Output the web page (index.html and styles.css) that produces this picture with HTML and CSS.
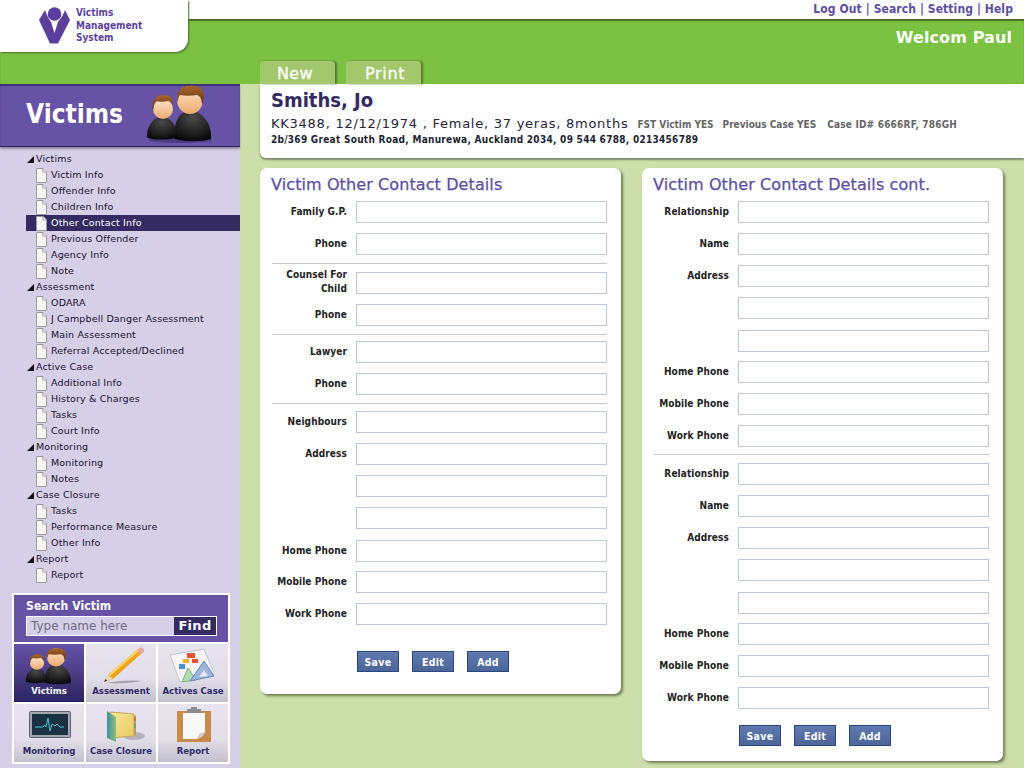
FILE: index.html
```html
<!DOCTYPE html>
<html lang="en">
<head>
<meta charset="utf-8">
<title>Victims Management System</title>
<link rel="stylesheet" href="styles.css">
</head>
<body>
<svg class="defs" width="0" height="0" aria-hidden="true">
  <defs>
    <linearGradient id="skin" x1="0" y1="0" x2="0" y2="1"><stop offset="0" stop-color="#fde6cc"/><stop offset="1" stop-color="#eda96f"/></linearGradient>
    <linearGradient id="hair" x1="0" y1="0" x2="0" y2="1"><stop offset="0" stop-color="#a8642c"/><stop offset="1" stop-color="#5e3213"/></linearGradient>
    <radialGradient id="cloth" cx=".5" cy=".25" r=".8"><stop offset="0" stop-color="#4a4a4a"/><stop offset="1" stop-color="#050505"/></radialGradient>
    <linearGradient id="folder" x1="0" y1="0" x2="1" y2="0"><stop offset="0" stop-color="#3f8fa0"/><stop offset="1" stop-color="#8cc07c"/></linearGradient>
    <linearGradient id="pages" x1="0" y1="0" x2="1" y2="1"><stop offset="0" stop-color="#fbe89a"/><stop offset="1" stop-color="#e9c860"/></linearGradient>
    <symbol id="people" viewBox="146 86 68 60" preserveAspectRatio="none">
      <ellipse cx="180" cy="142" rx="32" ry="3" fill="#2d2457" opacity=".45"/>
      <path d="M175 141c-2-15 3-27 15-29 13 2 22 14 21 29-11 3-25 3-36 0z" fill="url(#cloth)"/>
      <ellipse cx="190" cy="102" rx="13" ry="14" fill="url(#skin)"/>
      <path d="M178 105c-3-10 2-17 11-17 9-1 15 2 15 10 0 4-1 7-2 9 0-6-2-9-5-10-6 1-12 1-17 0-2 2-2 5-2 8z" fill="url(#hair)"/>
      <path d="M147 137c1-11 7-18 15-18 8 0 14 7 15 17 0 3 0 4-1 4-9 2-20 2-28 0-1 0-1-1-1-3z" fill="url(#cloth)"/>
      <ellipse cx="163" cy="111" rx="10" ry="10" fill="url(#skin)"/>
      <path d="M153 113c-2-8 1-16 10-16 7 0 11 3 10 10-1-2-2-4-4-4-5 1-10 1-13 0-2 2-2 5-3 10z" fill="url(#hair)"/>
    </symbol>
    <symbol id="doc" viewBox="0 0 11 15">
      <path d="M.5.500h6.500l3.500 3.500v10.500h-10z" fill="#f6f6f6" stroke="#9a9a9a"/>
      <path d="M7 .5v3.500h3.500" fill="#fff" stroke="#9a9a9a"/>
    </symbol>
  </defs>
</svg>

<div class="shell">
  <header class="masthead">
    <div class="logo">
      <svg class="logo-mark" viewBox="39 7 32 37" aria-hidden="true">
        <circle cx="54.500" cy="14" r="6.800" fill="#5a3f9e"/>
        <path d="M39 20l6-10c2 6 4 9 6 12l3.500 11 3.500-11c2-3 5-6 7-12l5 10-12 23.500h-8z" fill="#5a3f9e"/>
      </svg>
      <div class="logo-text">Victims<br>Management<br>System</div>
    </div>
    <nav class="toplinks"><a>Log Out</a> | <a>Search</a> | <a>Setting</a> | <a>Help</a></nav>
    <div class="greenbar">
      <div class="welcome">Welcom Paul</div>
      <div class="tabs">
        <a class="tab">New</a>
        <a class="tab">Print</a>
      </div>
    </div>
  </header>

  <div class="content">
    <aside class="sidebar">
      <div class="side-head">
        <span>Victims</span>
        <svg class="side-people"><use href="#people"/></svg>
      </div>
      <ul class="tree">
        <li class="group">Victims</li>
        <li class="item"><svg class="doc"><use href="#doc"/></svg>Victim Info</li>
        <li class="item"><svg class="doc"><use href="#doc"/></svg>Offender Info</li>
        <li class="item"><svg class="doc"><use href="#doc"/></svg>Children Info</li>
        <li class="item active"><svg class="doc"><use href="#doc"/></svg>Other Contact Info</li>
        <li class="item"><svg class="doc"><use href="#doc"/></svg>Previous Offender</li>
        <li class="item"><svg class="doc"><use href="#doc"/></svg>Agency Info</li>
        <li class="item"><svg class="doc"><use href="#doc"/></svg>Note</li>
        <li class="group">Assessment</li>
        <li class="item"><svg class="doc"><use href="#doc"/></svg>ODARA</li>
        <li class="item"><svg class="doc"><use href="#doc"/></svg>J Campbell Danger Assessment</li>
        <li class="item"><svg class="doc"><use href="#doc"/></svg>Main Assessment</li>
        <li class="item"><svg class="doc"><use href="#doc"/></svg>Referral Accepted/Declined</li>
        <li class="group">Active Case</li>
        <li class="item"><svg class="doc"><use href="#doc"/></svg>Additional Info</li>
        <li class="item"><svg class="doc"><use href="#doc"/></svg>History &amp; Charges</li>
        <li class="item"><svg class="doc"><use href="#doc"/></svg>Tasks</li>
        <li class="item"><svg class="doc"><use href="#doc"/></svg>Court Info</li>
        <li class="group">Monitoring</li>
        <li class="item"><svg class="doc"><use href="#doc"/></svg>Monitoring</li>
        <li class="item"><svg class="doc"><use href="#doc"/></svg>Notes</li>
        <li class="group">Case Closure</li>
        <li class="item"><svg class="doc"><use href="#doc"/></svg>Tasks</li>
        <li class="item"><svg class="doc"><use href="#doc"/></svg>Performance Measure</li>
        <li class="item"><svg class="doc"><use href="#doc"/></svg>Other Info</li>
        <li class="group">Report</li>
        <li class="item"><svg class="doc"><use href="#doc"/></svg>Report</li>
      </ul>
      <div class="quick">
        <div class="search">
          <div class="search-title">Search Victim</div>
          <div class="search-box"><span class="search-hint">Type name here</span><span class="search-btn">Find</span></div>
        </div>
        <div class="tiles">
          <div class="tile tile-on"><svg class="tile-icon" viewBox="0 0 70 44"><use href="#people" x="11" y="3" width="48" height="39"/></svg><span>Victims</span></div>
          <div class="tile">
            <svg class="tile-icon" viewBox="0 0 70 44">
              <path d="M20 39c10-2 25-3 36-2-10 2-26 3-36 2z" fill="#a5a3ad"/>
              <path d="M18 38l4-7 30-26 4 4-29 26z" fill="#efa41c"/>
              <path d="M22 31l30-26 1.500 1.500-30 26z" fill="#fad468"/>
              <path d="M18 38l4-7 5 4z" fill="#ecd8b8"/><path d="M18 38l1.500-3 1.800 1.500z" fill="#333"/>
              <circle cx="55" cy="6.500" r="3" fill="#eba9a0"/>
            </svg><span>Assessment</span></div>
          <div class="tile">
            <svg class="tile-icon" viewBox="0 0 70 44">
              <path d="M12 11l34-6 10 24-34 9z" fill="#f4f4f8" stroke="#c4c4cc"/>
              <rect x="29" y="9" width="8" height="5" fill="#e85030"/><rect x="25" y="15" width="6" height="4" fill="#f0b030"/><rect x="34" y="15" width="6" height="4" fill="#e85030"/><rect x="21" y="20" width="6" height="5" fill="#5090d8"/>
              <path d="M24 38l6-14 8 12z" fill="#b4dcb0" stroke="#7fb47f"/>
              <path d="M32 37l14-20 10 15z" fill="#9ab4da" stroke="#6888bc"/><path d="M41 33l5-7 4 6z" fill="#e4e8f0"/>
            </svg><span>Actives Case</span></div>
          <div class="tile">
            <svg class="tile-icon" viewBox="0 0 70 44">
              <rect x="15.500" y="7.500" width="41" height="26" rx="1" fill="#a4a8ae" stroke="#5f6268"/>
              <rect x="18" y="10" width="36" height="21" fill="#1c3044"/>
              <path d="M21 23h8l1.500-2 1.500 2 2-9 2 13 2-7 3 2 2-2 3 3h4" fill="none" stroke="#4fc3d0"/>
            </svg><span>Monitoring</span></div>
          <div class="tile">
            <svg class="tile-icon" viewBox="0 0 70 44">
              <ellipse cx="48" cy="32" rx="11" ry="4" fill="#b4b2bc"/>
              <path d="M24 8l24 2v22l-24 2z" fill="url(#pages)" stroke="#c4a858"/>
              <path d="M48 11l2 1v19l-2 1z" fill="#b0a070"/><rect x="48" y="13" width="2" height="4" fill="#d87040"/><rect x="48" y="20" width="2" height="4" fill="#70a860"/>
              <path d="M21 7l9 6v25l-9-4z" fill="url(#folder)"/>
            </svg><span>Case Closure</span></div>
          <div class="tile">
            <svg class="tile-icon" viewBox="0 0 70 44">
              <rect x="19" y="7" width="34" height="31" fill="#c98a4a"/>
              <path d="M25 9h22v19l-8 7h-14z" fill="#f8f8f6"/><path d="M47 28c-4 0-7 2-8 7 4-1 7-3 8-7z" fill="#cfcfcf"/>
              <rect x="29" y="5" width="14" height="4" fill="#8c8c8c"/><rect x="33" y="3" width="6" height="3" fill="#8c8c8c"/>
            </svg><span>Report</span></div>
        </div>
      </div>
    </aside>

    <main class="main">
      <section class="patient">
        <h1 class="patient-name">Smiths, Jo</h1>
        <p class="patient-line">KK3488, 12/12/1974 , Female, 37 yeras, 8months<span class="patient-flag">FST Victim YES</span><span class="patient-flag">Previous Case YES</span><span class="patient-flag patient-case">Case ID# 6666RF, 786GH</span></p>
        <p class="patient-addr">2b/369 Great South Road, Manurewa, Auckland 2034, 09 544 6788, 0213456789</p>
      </section>

      <div class="panels">
        <form class="panel panel-left">
          <h2 class="panel-title">Victim Other Contact Details</h2>
          <div class="row"><label>Family G.P.</label><input></div>
          <div class="row"><label>Phone</label><input></div>
          <hr class="sep">
          <div class="row row-tall"><label>Counsel For Child</label><input></div>
          <div class="row"><label>Phone</label><input></div>
          <hr class="sep sep-a">
          <div class="row"><label>Lawyer</label><input></div>
          <div class="row"><label>Phone</label><input></div>
          <hr class="sep sep-b">
          <div class="row"><label>Neighbours</label><input></div>
          <div class="row"><label>Address</label><input></div>
          <div class="row"><label></label><input></div>
          <div class="row row-wide"><label></label><input></div>
          <div class="row row-narrow"><label>Home Phone</label><input></div>
          <div class="row"><label>Mobile Phone</label><input></div>
          <div class="row"><label>Work Phone</label><input></div>
          <div class="actions"><button type="button">Save</button><button type="button">Edit</button><button type="button">Add</button></div>
        </form>

        <form class="panel panel-right">
          <h2 class="panel-title">Victim Other Contact Details cont.</h2>
          <div class="row"><label>Relationship</label><input></div>
          <div class="row"><label>Name</label><input></div>
          <div class="row"><label>Address</label><input></div>
          <div class="row row-wide"><label></label><input></div>
          <div class="row row-narrow"><label></label><input></div>
          <div class="row"><label>Home Phone</label><input></div>
          <div class="row"><label>Mobile Phone</label><input></div>
          <div class="row"><label>Work Phone</label><input></div>
          <hr class="sep sep-c">
          <div class="row"><label>Relationship</label><input></div>
          <div class="row"><label>Name</label><input></div>
          <div class="row"><label>Address</label><input></div>
          <div class="row row-wide"><label></label><input></div>
          <div class="row row-narrow"><label></label><input></div>
          <div class="row"><label>Home Phone</label><input></div>
          <div class="row"><label>Mobile Phone</label><input></div>
          <div class="row"><label>Work Phone</label><input></div>
          <div class="actions"><button type="button">Save</button><button type="button">Edit</button><button type="button">Add</button></div>
        </form>
      </div>
    </main>
  </div>
</div>
</body>
</html>
```

FILE: styles.css
```css
* { box-sizing: border-box; }
html, body { margin: 0; padding: 0; height: 100%; }
body { font-family: "DejaVu Sans", Verdana, sans-serif; background: #ccdfaa; overflow: hidden; }
.defs { position: absolute; }
.shell { width: 1024px; height: 768px; overflow: hidden; display: flex; flex-direction: column; }

/* Masthead */
.masthead { position: relative; height: 84px; flex: none; background: #fff; }
.logo { position: absolute; z-index: 2; left: 0; top: 0; width: 188px; height: 52px; background: #fff; border-bottom-right-radius: 13px; box-shadow: 1px 1px 2px #4c6d27; display: flex; align-items: flex-start; padding: 7px 0 0 39px; gap: 5px; }
.logo-mark { width: 32px; height: 37px; flex: none; }
.logo-text { font-family: "DejaVu Sans Condensed", "DejaVu Sans", sans-serif; font-weight: bold; font-size: 10px; line-height: 12.500px; color: #5b42a0; }
.toplinks { height: 19px; padding-right: 11px; text-align: right; font-family: "DejaVu Sans Condensed", "DejaVu Sans", sans-serif; font-size: 12px; font-weight: bold; line-height: 18px; color: #5b4ea3; letter-spacing: .1px; }
.greenbar { height: 65px; background: #7bc142; box-shadow: inset 0 2px 1px #4e6d2c; display: flex; flex-direction: column; justify-content: space-between; }
.welcome { text-align: right; padding: 9px 12px 0 0; font-size: 16px; font-weight: bold; color: #fff; line-height: 19px; letter-spacing: .1px; }
.tabs { display: flex; gap: 11px; padding-left: 260px; }
.tab { width: 75px; height: 23px; background: #a3c76c; border-radius: 4px 4px 0 0; box-shadow: 2px 0 2px #56762f; color: #fff; font-size: 16px; line-height: 25px; padding-left: 17px; letter-spacing: .3px; -webkit-text-stroke: .3px #fff; }
.tab + .tab { padding-left: 19px; letter-spacing: .7px; }

.content { display: flex; flex: 1; min-height: 0; }

/* Sidebar */
.sidebar { width: 240px; flex: none; background: #d6cfe8; display: flex; flex-direction: column; }
.side-head { height: 62px; background: #6653a6; box-shadow: inset 0 2px 1px #3d3173, 0 1px 0 #2b2450, 0 3px 2px #8e8aa0; display: flex; align-items: center; justify-content: space-between; padding: 0 26px 2px 26px; color: #fff; font-family: "DejaVu Sans Condensed", "DejaVu Sans", sans-serif; font-size: 26px; font-weight: bold; }
.side-people { width: 68px; height: 60px; flex: none; }
.tree { list-style: none; margin: 5px 0 10px 26px; padding: 0; font-size: 9.500px; color: #16122f; }
.group, .item { height: 16px; line-height: 16px; white-space: nowrap; display: flex; align-items: center; letter-spacing: .15px; }
.group { padding-left: 10px; position: relative; }
.group::before { content: ""; position: absolute; left: 1px; top: 5px; border-style: solid; border-width: 0 0 7px 7px; border-color: transparent transparent #111 transparent; }
.item { padding-left: 10px; }
.doc { width: 11px; height: 15px; flex: none; margin-right: 4px; }
.active { background: #352b63; color: #fff; }

.quick { margin-left: 12px; width: 218px; height: 171px; background: #fff; padding: 2px; display: flex; flex-direction: column; gap: 2px; }
.search { height: 47px; background: #6653a6; padding: 3px 11px 0 12px; color: #fff; flex: none; }
.search-title { font-family: "DejaVu Sans Condensed", "DejaVu Sans", sans-serif; font-size: 12px; font-weight: bold; line-height: 16px; letter-spacing: .1px; }
.search-box { margin-top: 2px; height: 20px; border: 1px solid #fff; background: #d6cfe8; display: flex; justify-content: space-between; }
.search-hint { color: #6e6a80; font-size: 12px; line-height: 18px; padding-left: 4px; }
.search-btn { width: 42px; background: #352b63; color: #fff; font-size: 13px; font-weight: bold; line-height: 18px; text-align: center; letter-spacing: .3px; }
.tiles { display: grid; grid-template-columns: repeat(3, 70px); grid-auto-rows: 58px; gap: 2px; }
.tile { background: linear-gradient(#e7e4ef 0, #e2dfea 60%, #c3c1ce 100%); display: flex; flex-direction: column; align-items: center; justify-content: flex-end; color: #2e2968; font-family: "DejaVu Sans Condensed", "DejaVu Sans", sans-serif; font-size: 9.500px; font-weight: bold; line-height: 12px; padding-bottom: 5px; position: relative; white-space: nowrap; }
.tile-icon { width: 70px; height: 44px; position: absolute; left: 0; top: 0; }
.tile-on { background: linear-gradient(#6653a6 0, #4b3d87 50%, #2a2260 100%); color: #fff; }

/* Main */
.main { flex: 1; min-width: 0; }
.patient { margin-left: 20px; height: 74px; background: #fff; border-bottom-left-radius: 6px; box-shadow: 0 2px 2px #7c8a68; padding: 3px 0 0 11px; }
.patient-name { margin: 0; font-family: "DejaVu Sans Condensed", "DejaVu Sans", sans-serif; font-size: 20px; font-weight: bold; line-height: 26px; color: #33295e; }
.patient-line { margin: 3px 0 0; font-size: 13px; line-height: 16px; color: #26233a; letter-spacing: .75px; white-space: nowrap; }
.patient-flag { font-family: "DejaVu Sans Condensed", "DejaVu Sans", sans-serif; font-size: 10px; font-weight: bold; color: #666; margin-left: 9px; letter-spacing: 0; }
.patient-case { margin-left: 11px; letter-spacing: .2px; }
.patient-addr { margin: 0; font-family: "DejaVu Sans Condensed", "DejaVu Sans", sans-serif; font-size: 10px; font-weight: bold; line-height: 13px; color: #221f33; letter-spacing: .28px; white-space: nowrap; }

.panels { display: flex; gap: 21px; align-items: flex-start; padding: 10px 0 0 20px; }
.panel { width: 361px; background: #fff; border-radius: 7px; box-shadow: 2px 2px 3px #6d7b55; display: flex; flex-direction: column; align-items: flex-start; }
.panel-left { height: 526px; }
.panel-right { height: 593px; }
.panel-title { margin: 0; padding-left: 11px; height: 33px; font-size: 16px; font-weight: normal; line-height: 33px; color: #5b4ea3; white-space: nowrap; letter-spacing: .1px; -webkit-text-stroke: .25px #5b4ea3; }

.row { display: grid; grid-template-columns: 96px 251px; grid-template-rows: 22px; align-items: center; margin-bottom: 10px; }
.row-wide { margin-bottom: 11px; }
.row-narrow { margin-bottom: 9px; }
.row label { font-family: "DejaVu Sans Condensed", "DejaVu Sans", sans-serif; font-size: 10px; font-weight: bold; line-height: 14px; color: #222; text-align: right; padding: 0 9px 0 6px; letter-spacing: .1px; }
.row-tall label { padding-bottom: 2px; padding-left: 12px; }
.row input { width: 251px; height: 22px; border: 1px solid #bcc6df; background: #fff; padding: 0; margin: 0; display: block; }
.sep { width: 335px; height: 1px; border: 0; background: #c5c9c5; margin: -2px 0 8px 12px; }
.sep-a { margin-bottom: 6px; }
.sep-b { margin-bottom: 7px; }
.sep-c { margin-top: -3px; margin-bottom: 8px; }
.actions { display: flex; gap: 13px; margin: 16px 0 0 97px; }
.panel-right .actions { margin-top: 6px; }
.actions button { width: 42px; height: 21px; padding: 0; border: 1px solid #2b4684; background: linear-gradient(#5f79b0, #4d6598); color: #fff; font-family: "DejaVu Sans Condensed", "DejaVu Sans", sans-serif; font-size: 10.500px; font-weight: bold; letter-spacing: .3px; }
```
